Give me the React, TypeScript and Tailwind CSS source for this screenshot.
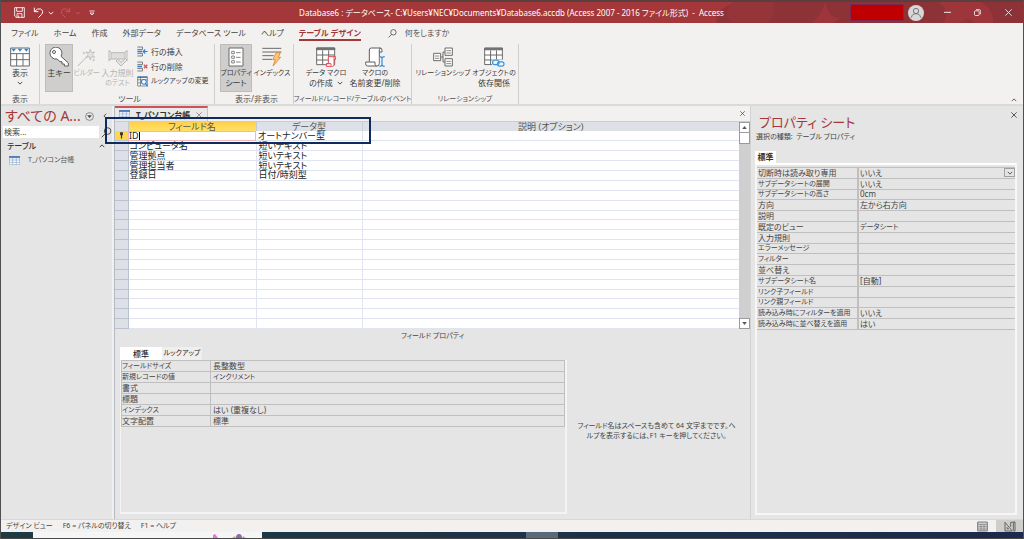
import type { ReactNode } from 'react';

const FIELDS = [
  ['コンピュータ名', '短いテキスト'],
  ['管理拠点', '短いテキスト'],
  ['管理担当者', '短いテキスト'],
  ['登録日', '日付/時刻型'],
];
const EMPTY_ROWS = Array.from({ length: 15 }, () => ['', '']);

const FIELD_PROPS = [
  ['フィールドサイズ', '長整数型'],
  ['新規レコードの値', 'インクリメント'],
  ['書式', ''],
  ['標題', ''],
  ['インデックス', 'はい (重複なし)'],
  ['文字配置', '標準'],
];

const SHEET_PROPS = [
  ['サブデータシートの展開', 'いいえ'],
  ['サブデータシートの高さ', '0cm'],
  ['方向', '左から右方向'],
  ['説明', ''],
  ['既定のビュー', 'データシート'],
  ['入力規則', ''],
  ['エラーメッセージ', ''],
  ['フィルター', ''],
  ['並べ替え', ''],
  ['サブデータシート名', '[自動]'],
  ['リンク子フィールド', ''],
  ['リンク親フィールド', ''],
  ['読み込み時にフィルターを適用', 'いいえ'],
  ['読み込み時に並べ替えを適用', 'はい'],
];

const labelSize = (text: string) => {
  const kana = (text.match(/[ぁ-んァ-ヶー]/g) ?? []).length;
  return kana >= 5 || (kana >= 4 && kana === text.length) ? 'text-[7px]' : 'text-[8px]';
};

const Chevron = ({ dir = 'down', className = '' }: { dir?: 'down' | 'up' | 'left'; className?: string }) => (
  <svg viewBox="0 0 8 8" className={`size-1.5 shrink-0 ${className}`} fill="none" stroke="currentColor" strokeWidth="1.2">
    <path d={dir === 'down' ? 'M1 2.5l3 3 3-3' : dir === 'up' ? 'M1 5.5l3-3 3 3' : 'M5.5 1l-3 3 3 3'} />
  </svg>
);

const Cross = ({ className = 'size-1.5' }: { className?: string }) => (
  <svg viewBox="0 0 18 18" className={className} fill="none" stroke="currentColor" strokeWidth="2.6">
    <path d="M1 1l16 16M17 1L1 17" />
  </svg>
);

const Magnifier = ({ className = '' }: { className?: string }) => (
  <svg viewBox="0 0 30 30" className={`shrink-0 ${className}`} fill="none" stroke="currentColor" strokeWidth="2.6">
    <circle cx="18" cy="11" r="9" />
    <path d="M12 18L2 28" />
  </svg>
);

const ViewIcon = () => (
  <svg viewBox="0 0 60 60" className="size-5" fill="none" stroke="#6a6a6a" strokeWidth="3">
    <path fill="#fff" d="M2 3h56v54H2z" />
    <path d="M2 20h56M2 38h56M20 20v37M39 20v37" />
    <path fill="#2b88d8" stroke="none" d="M4 5h14l-7 9zM23 5h14l-7 9zM42 5h14l-7 9z" />
  </svg>
);

const KeyIcon = () => (
  <svg viewBox="0 0 60 60" className="size-5" fill="#fff" stroke="#5c5c5c" strokeWidth="3" strokeLinejoin="round">
    <path d="M36 28l22 20v9H46v-6h-7v-7h-6L24 36a18 18 0 1 1 12-8z" />
    <circle cx="15" cy="15" r="4.5" />
  </svg>
);

const WandIcon = () => (
  <svg viewBox="0 0 60 60" className="size-5" fill="none" stroke="#b9b8b7" strokeWidth="3">
    <path d="M2 57l28-28" />
    <path fill="#e6e5e4" d="M40 7l3 10 10-2-7 8 7 8-10-2-3 10-3-10-10 2 7-8-7-8 10 2z" strokeWidth="2.5" />
    <path d="M21 14v8M17 18h8M50 35v8M46 39h8" strokeWidth="2" />
  </svg>
);

const ValidateIcon = () => (
  <svg viewBox="0 0 60 60" className="size-5" fill="none" stroke="#b9b8b7" strokeWidth="3">
    <path d="M3 9v34M57 9v34M3 14h6M3 38h6M51 14h6M51 38h6" />
    <path fill="#dedddc" d="M9 17h42v19H9z" />
    <path fill="#e6e5e4" d="M24 42l5-5 10 9 13-12 5 5-18 18z" />
  </svg>
);

const RowIcon = ({ kind }: { kind: 'insert' | 'delete' }) => (
  <svg viewBox="0 0 32 32" className="size-[11px] shrink-0" fill="none" stroke="#666" strokeWidth="2.4">
    <path d="M1 3h15v7H1M1 22h15v7H1" />
    <path stroke="#2b88d8" strokeWidth="5" d="M1 16h14" />
    {kind === 'insert' ? (
      <path stroke="#2b88d8" strokeWidth="3.6" d="M31 16H18M24 10l-6 6 6 6" />
    ) : (
      <path stroke="#e8474f" strokeWidth="3.6" d="M20 11l10 10M30 11L20 21" />
    )}
  </svg>
);

const LookupIcon = () => (
  <svg viewBox="0 0 32 32" className="size-[11px] shrink-0" fill="none" stroke="#666" strokeWidth="2.2">
    <path fill="#fff" d="M2 2h28v27H2z" />
    <path stroke="#2b88d8" strokeWidth="4" d="M2 4h28" />
    <path d="M2 11h28M2 20h10M10 2v27" />
    <circle cx="20" cy="17" r="7" stroke="#2b7cd3" strokeWidth="3" fill="#fff" />
    <path stroke="#2b7cd3" strokeWidth="3.5" d="M25 22l6 8" />
  </svg>
);

const PropertyIcon = () => (
  <svg viewBox="0 0 60 60" className="size-5" fill="none" stroke="#6a6a6a" strokeWidth="3">
    <path fill="#fff" d="M9 3h42v54H9z" />
    <path strokeWidth="2.4" d="M17 13h8v7h-8zM17 27h8v7h-8zM17 41h8v7h-8zM30 17h14M30 31h14M30 45h14" />
  </svg>
);

const IndexIcon = () => (
  <svg viewBox="0 0 60 60" className="size-5" fill="none" stroke="#6a6a6a" strokeWidth="3">
    <path d="M1 4h57M1 15h57M1 26h34M1 37h29" />
    <path fill="#fbc77d" stroke="#e0801f" strokeWidth="2.4" strokeLinejoin="round" d="M43 17h12l-6 14h7L33 57l7-19h-8z" />
  </svg>
);

const DataMacroIcon = () => (
  <svg viewBox="0 0 60 60" className="size-5" fill="none" stroke="#6a6a6a" strokeWidth="3">
    <path fill="#fff" d="M2 3h54v50H2z" />
    <path fill="#777" d="M2 3h54v5H2z" />
    <path d="M2 24h54M2 39h54M20 10v43M38 10v43" />
    <path fill="#fff" stroke="#e8474f" d="M37 29h22v8h-5v16q0 5-5 5H31v-8h6z" />
    <path stroke="#e8474f" d="M31 50h14v6M54 37v-7" />
  </svg>
);

const MacroIcon = () => (
  <svg viewBox="0 0 60 60" className="size-5" fill="none" stroke="#5c5c5c" strokeWidth="3" strokeLinejoin="round">
    <path fill="#fff" d="M13 44V9q0-6 6-6h26q6 0 6 7v5h-8v34q0 8-7 8H8q-6 0-6-7v-5h28v7q0 5 5 5" />
    <path d="M43 15V8q0-5 5-5" />
    <path stroke="#f2f1f0" strokeWidth="13" d="M51 27v31" />
    <path stroke="#2b88d8" strokeWidth="3.4" d="M43 29q7 0 8 4 1-4 8-4M51 33v21M43 58q7 0 8-4 1 4 8 4" />
  </svg>
);

const RelationIcon = () => (
  <svg viewBox="0 0 60 60" className="size-5" fill="#fff" stroke="#6a6a6a" strokeWidth="3">
    <path fill="none" d="M23 30h7M30 15v30M30 15h7M30 45h7" />
    <path d="M2 19h21v22H2zM36 3h22v22H36zM36 35h22v22H36z" />
    <path d="M6 27h13M6 34h13M40 11h14M40 18h14M40 43h14M40 50h14" strokeWidth="2.4" />
  </svg>
);

const DependencyIcon = () => (
  <svg viewBox="0 0 64 60" className="h-5 w-[21px]" fill="none" stroke="#6a6a6a" strokeWidth="3">
    <path fill="#fff" d="M2 3h54v50H2z" />
    <path fill="#777" d="M2 3h54v5H2z" />
    <path d="M2 24h54M2 39h54M20 10v43M38 10v43" />
    <rect x="24" y="38" width="38" height="22" fill="#f2f1f0" stroke="none" />
    <g stroke="#3a96dd" strokeWidth="3.6">
      <rect x="26" y="40" width="20" height="13" rx="6.5" />
      <rect x="41" y="45" width="20" height="13" rx="6.5" />
    </g>
  </svg>
);

const SheetIcon = () => (
  <svg viewBox="0 0 33 27" className="h-[9px] w-[11px] shrink-0" fill="none" stroke="#8aa4c8" strokeWidth="2">
    <path fill="#fff" d="M1 1h31v25H1z" />
    <path fill="#3f6fb5" stroke="#3f6fb5" d="M1 1h31v4H1z" />
    <path d="M1 12h31M1 19h31M11 5v21M22 5v21" />
  </svg>
);

function Group({ label, className, children }: { label: string; className: string; children: ReactNode }) {
  return (
    <section aria-label={label} className={`flex shrink-0 flex-col border-r border-[#d0cfce] ${className}`}>
      <div className="flex h-12 shrink-0 items-stretch">{children}</div>
      <div className={`flex flex-1 items-center justify-center pt-0.5 whitespace-nowrap text-[#505050] ${labelSize(label)} leading-[10px]`}>{label}</div>
    </section>
  );
}

function BigButton({ icon, lines, className, active, disabled, arrow }: {
  icon: ReactNode; lines: string[]; className: string; active?: boolean; disabled?: boolean; arrow?: 'inline' | 'below';
}) {
  return (
    <button
      disabled={disabled}
      className={`flex shrink-0 flex-col items-center leading-[10px] whitespace-nowrap ${className} ${
        active ? 'border border-[#bdbcbb] bg-[#cfcecd] pt-[2px]' : 'pt-[3px]'
      } ${disabled ? 'text-[#b4b3b2]' : 'text-[#3b3b3b]'}`}
    >
      <span className="mb-px flex h-5">{icon}</span>
      {lines.map((l, i) => (
        <span key={l} className={`flex items-center gap-1 ${labelSize(l)} leading-[10px]`}>
          {l}
          {arrow === 'inline' && i === lines.length - 1 && <Chevron />}
        </span>
      ))}
      {arrow === 'below' && <Chevron className="mt-0.5" />}
    </button>
  );
}

function TitleBar() {
  return (
    <header className="relative flex h-[23px] items-center overflow-hidden border-t-2 border-[#5b3f3f] bg-[#a4373a] text-white">
      <svg viewBox="0 0 320 22" className="absolute top-0 right-0 h-[22px] w-80" aria-hidden="true">
        <path fill="#8d3337" d="M14 22Q10 8 30 2L36 0h284v22z" />
        <path fill="#963539" d="M30 0h40q4 14-8 22H30q-12-10 0-22z" />
        <path fill="#9d363a" d="M122 0q4 16 14 16l-6 6h-22q10-8 14-22zM236 0h42q14 8 12 22h-18q-6-8-12-3l-8 3h-12q8-12-4-22z" />
      </svg>
      <div className="relative flex w-full items-center">
        <div className="flex w-[172px] items-center pl-[13px]">
          <button aria-label="上書き保存">
            <svg viewBox="0 0 33 33" className="size-[11px]" fill="none" stroke="#fff" strokeWidth="2.6">
              <path d="M2 2h29v29H6l-4-4zM8 2v11h17V2M9 31V20h15v11M14 31v-6" />
            </svg>
          </button>
          <button aria-label="元に戻す" className="ml-2 flex items-center gap-1">
            <svg viewBox="0 0 33 33" className="size-[11px]" fill="none" stroke="#fff" strokeWidth="3">
              <path d="M4 2v12h12M4 14Q14 2 23 6q11 7 2 17l-9 9" />
            </svg>
            <Chevron />
          </button>
          <button aria-label="やり直し" disabled className="ml-1.5 flex items-center gap-1 text-[#c9575b]">
            <svg viewBox="0 0 33 33" className="size-[11px]" fill="none" stroke="currentColor" strokeWidth="3">
              <path d="M29 2v12H17M29 14Q19 2 10 6q-11 7-2 17l9 9" />
            </svg>
            <Chevron />
          </button>
          <button aria-label="クイック アクセス ツール バーのユーザー設定" className="ml-2">
            <svg viewBox="0 0 18 18" className="size-1.5" fill="none" stroke="#fff" strokeWidth="2.4">
              <path d="M1 3h16M3 9h12l-6 6z" />
            </svg>
          </button>
        </div>
        <h1 className="flex-1 text-center text-[8px] whitespace-pre">
          Database6 : データベース- C:¥Users¥NEC¥Documents¥Database6.accdb (Access 2007 - 2016 ファイル形式)  -  Access
        </h1>
        <div className="flex w-[173px] items-center">
          <div className="h-[17px] w-[54px] border border-[#7a2a52] bg-[#c00000]" />
          <button aria-label="アカウント" className="ml-1">
            <svg viewBox="0 0 48 48" className="size-4" fill="none" stroke="#6b6b6b" strokeWidth="2.6">
              <circle cx="24" cy="24" r="24" fill="#d8d8d8" stroke="none" />
              <circle cx="24" cy="18" r="8" />
              <path d="M10 38q2-12 14-12t14 12" />
            </svg>
          </button>
          <button aria-label="最小化" className="ml-5">
            <svg viewBox="0 0 21 21" className="size-[7px]" stroke="#fff" strokeWidth="2.6"><path d="M0 10h21" /></svg>
          </button>
          <button aria-label="元に戻す (縮小)" className="ml-[23px]">
            <svg viewBox="0 0 21 21" className="size-[7px]" fill="none" stroke="#fff" strokeWidth="2.4">
              <rect x="1.5" y="5.5" width="14" height="14" rx="3" />
              <path d="M6 2h9q5 0 5 5v9" />
            </svg>
          </button>
          <button aria-label="閉じる" className="ml-6">
            <svg viewBox="0 0 21 21" className="size-[7px]" stroke="#fff" strokeWidth="2.4"><path d="M1 1l19 19M20 1L1 20" /></svg>
          </button>
        </div>
      </div>
    </header>
  );
}

function Ribbon() {
  return (
    <div className="border-b-2 border-[#dadad9] bg-[#f2f1f0]">
      <nav className="flex h-5 items-center gap-[15px] pl-2.5 text-[8px] whitespace-nowrap text-[#444]">
        {['ファイル', 'ホーム', '作成', '外部データ', 'データベース ツール', 'ヘルプ'].map((t) => (
          <button key={t}>{t}</button>
        ))}
        <button className="flex h-[18px] items-center self-start border-b-2 border-[#a4373a] pt-1 font-bold text-[#a4373a]">
          テーブル デザイン
        </button>
        <label className="ml-3 flex items-center gap-2">
          <Magnifier className="size-[9px]" />
          <input aria-label="操作アシスト" placeholder="何をしますか" className="w-24 bg-transparent outline-none placeholder:text-[#555]" />
        </label>
      </nav>
      <div className="flex h-[61px] pt-px">
        <Group label="表示" className="w-[39px]">
          <BigButton icon={<ViewIcon />} lines={['表示']} arrow="below" className="w-[38px]" />
        </Group>
        <Group label="ツール" className="w-[175px] pl-[5px]">
          <BigButton icon={<KeyIcon />} lines={['主キー']} active className="w-7" />
          <BigButton icon={<WandIcon />} lines={['ビルダー']} disabled className="w-[27px]" />
          <BigButton icon={<ValidateIcon />} lines={['入力規則', 'のテスト']} disabled className="w-[35px]" />
          <div className="flex flex-col pl-0.5 whitespace-nowrap text-[#3b3b3b]">
            <button className="flex h-[15px] items-center gap-[3px] text-[8px]"><RowIcon kind="insert" />行の挿入</button>
            <button className="flex h-[15px] items-center gap-[3px] text-[8px]"><RowIcon kind="delete" />行の削除</button>
            <button className="flex h-[15px] items-center gap-[3px] text-[7px]"><LookupIcon />ルックアップの変更</button>
          </div>
        </Group>
        <Group label="表示/非表示" className="w-[79px] pl-[5px]">
          <BigButton icon={<PropertyIcon />} lines={['プロパティ', 'シート']} active className="w-8" />
          <BigButton icon={<IndexIcon />} lines={['インデックス']} className="w-10" />
        </Group>
        <Group label="フィールド/レコード/テーブルのイベント" className="w-[118px]">
          <BigButton icon={<DataMacroIcon />} lines={['データ マクロ', 'の作成']} arrow="inline" className="ml-2 w-12" />
          <BigButton icon={<MacroIcon />} lines={['マクロの', '名前変更/削除']} className="w-[50px]" />
        </Group>
        <Group label="リレーションシップ" className="w-[107px]">
          <BigButton icon={<RelationIcon />} lines={['リレーションシップ']} className="ml-1 w-[54px]" />
          <BigButton icon={<DependencyIcon />} lines={['オブジェクトの', '依存関係']} className="w-12" />
        </Group>
        <button aria-label="リボンを折りたたむ" className="mr-1.5 mb-px ml-auto self-end text-[#555]">
          <Chevron dir="up" />
        </button>
      </div>
    </div>
  );
}

function NavPane() {
  return (
    <aside className="w-[113px] shrink-0 border-r-2 border-[#f0f0f0] bg-[#e5e5e5]">
      <div className="flex h-5 items-center pl-1">
        <h2 className="flex-1 text-[14px] leading-5 whitespace-nowrap text-[#a4373a]">すべての A...</h2>
        <button aria-label="メニュー">
          <svg viewBox="0 0 30 30" className="size-[9px]" fill="none" stroke="#555" strokeWidth="2">
            <circle cx="15" cy="15" r="13" />
            <path fill="#444" d="M9 12h12l-6 7z" />
          </svg>
        </button>
        <button aria-label="シャッター バーを閉じる" className="mr-1 ml-2 text-[#444]"><Chevron dir="left" /></button>
      </div>
      <div className="flex h-3 items-center">
        <input aria-label="検索" placeholder="検索..." className="ml-0.5 h-3 w-24 bg-white pl-px text-[8px] outline-none placeholder:text-[#444]" />
        <Magnifier className="ml-0.5 size-[11px] text-[#444]" />
      </div>
      <button className="mt-0.5 flex h-3 w-full items-center justify-between pr-[7px] pl-1.5 text-[8px] font-medium text-[#333]">
        テーブル
        <Chevron dir="up" />
      </button>
      <a href="#t" className="flex h-4 items-center gap-2 pl-2 text-[7px] text-[#555]">
        <SheetIcon />
        T_パソコン台帳
      </a>
    </aside>
  );
}

function DesignGrid() {
  return (
    <div className="flex border-t border-[#c9cdd2] bg-white">
      <table className="h-[207px] flex-1 table-fixed border-collapse text-[9px] leading-[8px] text-[#222]">
        <colgroup>
          <col className="w-[13px]" />
          <col className="w-32" />
          <col className="w-[106px]" />
          <col />
        </colgroup>
        <thead>
          <tr className="h-[9px] bg-[#dde1e7] text-[#555]">
            <th className="border-r border-[#c3cad4] p-0" />
            <th className="border-r border-[#c3cad4] bg-[#ffd64f] bg-linear-to-b from-[#ffd04a] to-[#ffe066] p-0 font-normal">フィールド名</th>
            <th className="border-r border-[#c9d0dc] p-0 font-normal">データ型</th>
            <th className="p-0 font-normal">説明 (オプション)</th>
          </tr>
        </thead>
        <tbody>
          <tr className="h-[9px]">
            <td className="bg-[#ffd64f] p-0">
              <svg viewBox="0 0 24 24" className="mx-auto size-[7px]" fill="#333">
                <path d="M7 1h10v8l-3 3v9l-2 2-2-2v-9l-3-3z" />
              </svg>
            </td>
            <td className="p-0 outline outline-[#f5b5bb] -outline-offset-1">
              <input aria-label="フィールド名" defaultValue="ID" size={2} className="block h-2 w-3 border-r border-black p-0 pl-px outline-none" />
            </td>
            <td className="border-r border-[#dfe4f0] p-0 pl-0.5">オートナンバー型</td>
            <td className="p-0" />
          </tr>
          {[...FIELDS, ...EMPTY_ROWS].map(([name, type], i) => (
            <tr key={i} className="h-[9px]">
              <td className="border-y border-r border-[#b9c2ce] bg-[#dde1e7] p-0" />
              <td className="border border-[#dfe4f0] p-0 pl-px">{name}</td>
              <td className="border border-[#dfe4f0] p-0 pl-0.5">{type}</td>
              <td className="border-y border-[#dfe4f0] p-0" />
            </tr>
          ))}
        </tbody>
      </table>
      <div className="flex w-[11px] flex-col justify-between bg-[#cfcfcf]">
        <div>
          <button aria-label="上へスクロール" className="flex h-[11px] w-full items-center justify-center border border-[#9a9a9a] bg-white">
            <svg viewBox="0 0 6 4" className="h-[3px] w-[5px]" fill="#555"><path d="M3 0l3 4H0z" /></svg>
          </button>
          <div className="h-[11px] border border-t-0 border-[#9a9a9a] bg-white" />
        </div>
        <button aria-label="下へスクロール" className="flex h-[11px] w-full items-center justify-center border border-[#9a9a9a] bg-white">
          <svg viewBox="0 0 6 4" className="h-[3px] w-[5px]" fill="#555"><path d="M3 4l3-4H0z" /></svg>
        </button>
      </div>
    </div>
  );
}

function DesignView() {
  return (
    <main className="relative flex min-w-0 flex-1 flex-col border-l border-[#b5bac2] bg-[#e5e5e5]">
      <div className="flex h-[15px] items-stretch justify-between bg-[#f2f1f0]">
        <div className="flex w-[93px] items-center border-t-2 border-r border-t-[#cf5257] border-r-[#c4c4c4] bg-[#e9e9e9] pl-1">
          <SheetIcon />
          <button className="ml-1 flex-1 pl-0.5 text-left text-[8px] font-bold whitespace-nowrap text-[#333]">T_パソコン台帳</button>
          <button aria-label="タブを閉じる" className="mr-[5px] text-[#888]"><Cross /></button>
        </div>
        <button aria-label="ドキュメントを閉じる" className="mr-[5px] text-[#444]"><Cross className="size-[5px]" /></button>
      </div>
      <DesignGrid />
      <div className="flex h-[18px] items-start justify-center pt-0.5 text-[7px] leading-[10px] text-[#444]">フィールド プロパティ</div>
      <div className="flex flex-1 pr-1 pb-[5px] pl-[5px]">
        <div className="flex min-w-0 flex-1 flex-col">
          <div role="tablist" className="flex h-[13px] items-stretch text-[#222]">
            <button role="tab" aria-selected="true" className="w-[42px] bg-white text-[8px] font-medium">標準</button>
            <button role="tab" aria-selected="false" className="w-10 bg-[#efefef] text-[7px] whitespace-nowrap">ルックアップ</button>
          </div>
          <div className="flex-1 border-r-2 border-b-2 border-l border-[#f4f4f4]">
            <table className="w-full table-fixed border-collapse leading-[8px] text-[#444]">
              <colgroup>
                <col className="w-[89px]" />
                <col />
              </colgroup>
              <tbody>
                {FIELD_PROPS.map(([k, v]) => (
                  <tr key={k} className="h-[11px]">
                    <th className={`border border-[#bfbfbf] p-0 text-left font-normal ${labelSize(k)} leading-[8px]`}>{k}</th>
                    <td className={`border border-[#bfbfbf] p-0 pl-0.5 ${labelSize(v)} leading-[8px]`}>{v}</td>
                  </tr>
                ))}
              </tbody>
            </table>
          </div>
        </div>
        <p className="flex w-[179px] shrink-0 items-center justify-center text-center text-[7px] leading-[10px] text-[#444]">
          フィールド名はスペースも含めて 64 文字までです。ヘ<br />ルプを表示するには、F1 キーを押してください。
        </p>
      </div>
      <div className="pointer-events-none absolute top-[11px] -left-2.5 h-[27px] w-[266px] border-2 border-[#0f2a5c]" />
    </main>
  );
}

function PropertySheet() {
  return (
    <aside className="flex w-[273px] shrink-0 flex-col border-l border-[#d2d2d2] bg-[#e5e5e5] pr-1.5 pb-1 pl-1">
      <div className="flex h-6 items-start justify-between pl-1">
        <h2 className="pt-1 text-[13px] leading-6 text-[#a4373a]">プロパティ シート</h2>
        <button aria-label="プロパティ シートを閉じる" className="pt-1.5 text-[#444]"><Cross /></button>
      </div>
      <p className="h-[21px] pt-0.5 pl-px text-[7px] leading-[10px] text-[#444]">選択の種類:&nbsp; テーブル プロパティ</p>
      <div role="tablist" className="flex h-3">
        <button role="tab" aria-selected="true" className="w-[21px] bg-white text-[8px] leading-3 font-bold whitespace-nowrap text-[#333]">標準</button>
      </div>
      <div className="flex-1 border-2 border-[#f6f6f6] border-t-white pt-0.5">
        <table className="h-[163px] w-full table-fixed border-collapse whitespace-nowrap text-[#444]">
          <colgroup>
            <col className="w-[101px]" />
            <col />
          </colgroup>
          <tbody>
            <tr className="h-[9px]">
              <th className="border-y border-r-2 border-[#bfbfbf] p-0 pl-px text-left text-[8px] leading-[8px] font-normal">
                <label htmlFor="readonly">切断時は読み取り専用</label>
              </th>
              <td className="border-y border-[#bfbfbf] p-0 pl-px text-[8px] leading-[8px]">
                <div className="flex h-2 items-center justify-between">
                  <select id="readonly" className="h-2 flex-1 appearance-none bg-transparent outline-none">
                    <option>いいえ</option>
                    <option>はい</option>
                  </select>
                  <span className="flex h-[9px] w-[11px] items-center justify-center border border-[#a0a0a0]">
                    <Chevron />
                  </span>
                </div>
              </td>
            </tr>
            {SHEET_PROPS.map(([k, v]) => (
              <tr key={k} className="h-[9px]">
                <th className={`border-y border-r-2 border-[#bfbfbf] p-0 pl-px text-left font-normal ${labelSize(k)} leading-[8px]`}>{k}</th>
                <td className={`border-y border-[#bfbfbf] p-0 pl-px ${labelSize(v)} leading-[8px]`}>{v}</td>
              </tr>
            ))}
          </tbody>
        </table>
      </div>
    </aside>
  );
}

function StatusBar() {
  return (
    <footer className="flex h-[13px] items-center gap-2.5 border-t border-[#d8d8d8] bg-[#f2f1f0] pl-[5px] text-[7px] text-[#444]">
      <span>デザイン ビュー</span>
      <span>F6 = パネルの切り替え</span>
      <span>F1 = ヘルプ</span>
      <div className="ml-auto flex h-full items-center">
        <button aria-label="データシート ビュー" className="flex w-7 items-center justify-center">
          <svg viewBox="0 0 33 33" className="size-[11px]" fill="#d5d5d5" stroke="#666" strokeWidth="2.4">
            <path d="M2 3h29v27H2z" />
            <path d="M2 10h29M12 10v20M21 10v20M2 17h29M2 24h29" strokeWidth="1.6" />
          </svg>
        </button>
        <button aria-label="デザイン ビュー" className="flex h-full w-[27px] items-center justify-center bg-[#cfcecd]">
          <svg viewBox="0 0 36 33" className="h-[11px] w-3" fill="none" stroke="#555" strokeWidth="2.6">
            <path d="M3 4v26h22z" />
            <path d="M9 19v5h5z" strokeWidth="2" />
            <path d="M20 18V4h6M33 3v27h-5M26 3h7M28 4v24" />
          </svg>
        </button>
      </div>
    </footer>
  );
}

function Taskbar() {
  return (
    <div className="flex h-[7px] border-b border-[#4a4a4a] bg-linear-to-r from-[#1f3b42] to-[#1b2a4d]">
      <div className="ml-8 flex w-[229px] items-end bg-[#f5f5f5] pl-[179px]">
        <svg viewBox="0 0 36 6" className="h-1.5 w-9">
          <path fill="#e874e0" d="M1 6V3l2-1 3 4z" />
          <path fill="#8a6bb0" d="M24 6q0-4 3-4t3 4z" />
          <path fill="#d9a66a" d="M20 6l3-2 1 2zM30 6l1-2 3 2z" />
        </svg>
      </div>
      <div className="ml-[264px] w-8 bg-[#5a6b78]" />
    </div>
  );
}

export default function App() {
  return (
    <div className="flex min-h-screen flex-col border-r border-l border-[#505050] bg-[#e5e5e5] font-['Noto_Sans','Noto_Sans_CJK_JP',sans-serif] [font-feature-settings:'palt']">
      <TitleBar />
      <Ribbon />
      <div className="flex flex-1 items-stretch">
        <NavPane />
        <DesignView />
        <PropertySheet />
      </div>
      <StatusBar />
      <Taskbar />
    </div>
  );
}
